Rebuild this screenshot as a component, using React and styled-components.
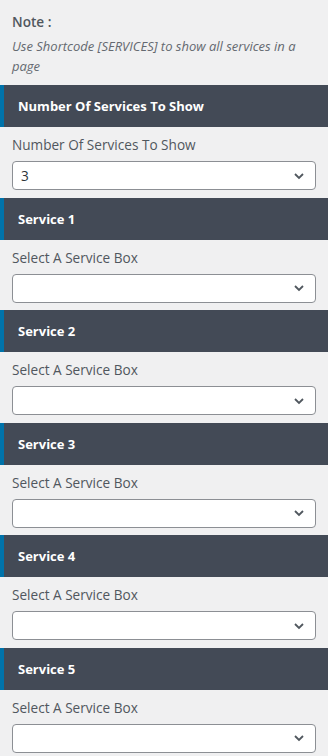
import styled, { createGlobalStyle } from "styled-components";

const Global = createGlobalStyle`
  html, body {
    margin: 0;
    padding: 0;
    background: #f0f0f1;
  }
  body {
    font-family: "Open Sans", "Liberation Sans", sans-serif;
    color: #50575e;
  }
`;

const Panel = styled.div`
  width: 328px;
  background: #f0f0f1;
  padding-top: 12px;
`;

const Note = styled.div`
  padding: 0 12px 9px;
  h4 {
    margin: 0 0 4px;
    font-size: 13.6px;
    font-weight: 600;
    line-height: 20px;
    color: #50575e;
  }
  p {
    margin: 0;
    font-size: 13px;
    font-style: italic;
    line-height: 20px;
    color: #646970;
  }
`;

const SectionHead = styled.div`
  height: 42px;
  display: flex;
  align-items: center;
  background: #434a56;
  border-left: 4px solid #0073aa;
  padding-left: 14px;
  color: #fff;
  font-size: 13px;
  font-weight: 700;
`;

const Field = styled.div`
  padding: 8px 12px 7.5px;
  display: flex;
  flex-direction: column;
  gap: 6px;
`;

const Label = styled.label`
  font-size: 13.6px;
  font-weight: 500;
  line-height: 20px;
  color: #50575e;
`;

const SelectBox = styled.div`
  height: 29px;
  box-sizing: border-box;
  border: 1px solid #8c8f94;
  border-radius: 4px;
  background: #fff;
  display: flex;
  align-items: center;
  justify-content: space-between;
  padding: 0 10px 0 8px;
  font-size: 13.6px;
  color: #2c3338;
  svg {
    width: 12px;
    height: 12px;
  }
`;

const Chevron = () => (
  <svg viewBox="0 0 12 12" fill="none">
    <path d="M2 4l4 4 4-4" stroke="#50575e" strokeWidth="1.8" />
  </svg>
);

const Select = ({ value }) => (
  <SelectBox>
    <span>{value}</span>
    <Chevron />
  </SelectBox>
);

const services = [1, 2, 3, 4, 5];

export default function App() {
  return (
    <Panel>
      <Global />
      <Note>
        <h4>Note :</h4>
        <p>Use Shortcode [SERVICES] to show all services in a page</p>
      </Note>
      <SectionHead>Number Of Services To Show</SectionHead>
      <Field>
        <Label>Number Of Services To Show</Label>
        <Select value="3" />
      </Field>
      {services.map((n) => (
        <div key={n}>
          <SectionHead>Service {n}</SectionHead>
          <Field>
            <Label>Select A Service Box</Label>
            <Select value="" />
          </Field>
        </div>
      ))}
    </Panel>
  );
}
